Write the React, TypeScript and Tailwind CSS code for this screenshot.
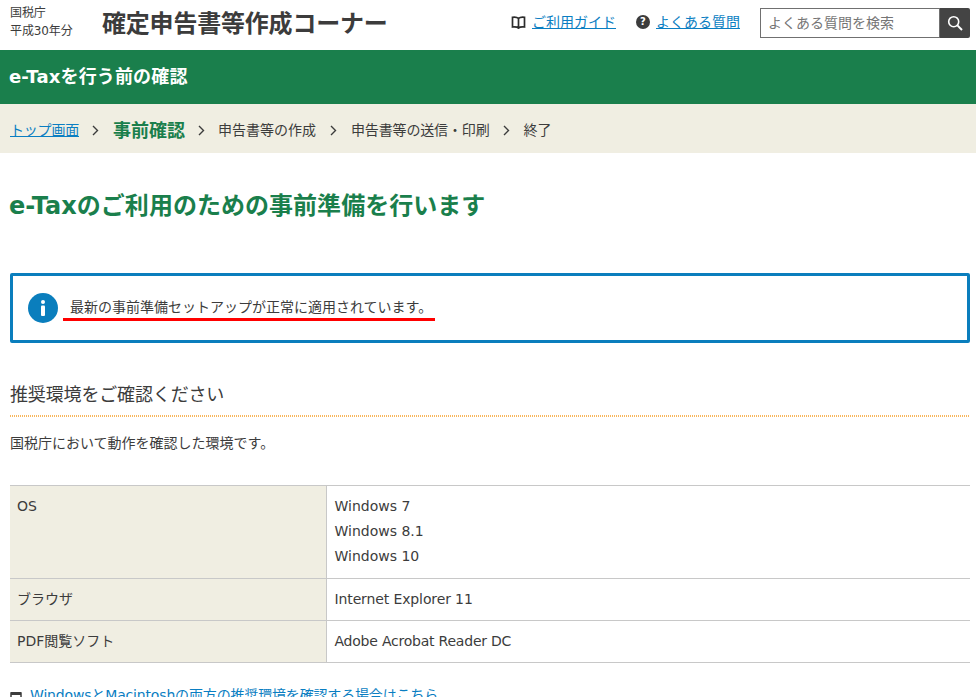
import React from "react";

const mixed = "font-['DejaVu_Sans','Noto_Sans_CJK_JP',sans-serif]";

function Chevron() {
  return (
    <svg width="7" height="11" viewBox="0 0 7 11" className="shrink-0">
      <path d="M1 1l4.5 4.5L1 10" fill="none" stroke="#3c3c3c" strokeWidth="1.4" />
    </svg>
  );
}

export default function App() {
  return (
    <div className={`h-[697px] w-[976px] overflow-hidden bg-white text-[#3c3c3c] ${mixed}`}>
      <header className="flex h-[50px] items-start">
        <div className="ml-[10px] mt-[4px] w-[92px] text-[12px] leading-[18px] tracking-[-0.1px] text-[#3c3c3c]">
          <div>国税庁</div>
          <div>平成30年分</div>
        </div>
        <div className="mt-[11px] w-[300px] text-[24px] font-bold leading-[26px] tracking-[-0.2px] text-[#3c3c3c]">確定申告書等作成コーナー</div>
        <div className="ml-[109px] mt-[12px] flex h-[20px] items-center">
          <svg width="15" height="13" viewBox="0 0 15 13">
            <path d="M7.5 2.5C6.5 1.5 4 1 1.5 1.3V11c2.5-.3 5 .1 6 1 1-.9 3.5-1.3 6-1V1.3C11 1 8.5 1.5 7.5 2.5zM7.5 2.5V12" fill="none" stroke="#2c2c2c" strokeWidth="1.7" />
          </svg>
          <a className="ml-[6px] text-[14px] leading-none text-[#0a7ec2] underline">ご利用ガイド</a>
          <span className="ml-[20px] flex h-[14px] w-[14px] items-center justify-center rounded-full bg-[#3c3c3c] text-[10px] font-bold leading-none text-white">?</span>
          <a className="ml-[6px] text-[14px] leading-none text-[#0a7ec2] underline">よくある質問</a>
        </div>
        <div className="ml-[20px] mt-[8px] flex h-[30px] w-[210px] items-stretch">
          <div className="flex w-[180px] items-center border border-[#707070] pl-[7px] text-[14px] text-[#757575]">よくある質問を検索</div>
          <div className="flex w-[30px] items-center justify-center rounded-r-[2px] bg-[#444444]">
            <svg width="16" height="16" viewBox="0 0 16 16">
              <circle cx="6.7" cy="6.7" r="5" fill="none" stroke="#fff" strokeWidth="1.6" />
              <path d="M10.4 10.4L15 15" stroke="#fff" strokeWidth="2" />
            </svg>
          </div>
        </div>
      </header>

      <div className="flex h-[54px] items-center bg-[#1a7f4c] pb-[1px] pl-[9px] text-[18px] font-bold tracking-[0.15px] text-white">e-Taxを行う前の確認</div>

      <nav className="flex h-[49px] items-center bg-[#f0eee2] pl-[10px] pt-[4px] text-[14px]">
        <a className="tracking-[-0.2px] text-[#0a7ec2] underline">トップ画面</a>
        <span className="ml-[13px]"><Chevron /></span>
        <span className="ml-[14px] text-[18px] font-bold text-[#1a7f4c]">事前確認</span>
        <span className="ml-[13px]"><Chevron /></span>
        <span className="ml-[13px]">申告書等の作成</span>
        <span className="ml-[14px]"><Chevron /></span>
        <span className="ml-[14px] tracking-[-0.15px]">申告書等の送信・印刷</span>
        <span className="ml-[13px]"><Chevron /></span>
        <span className="ml-[14px]">終了</span>
      </nav>

      <main className="pl-[10px] pr-[6px]">
        <h1 className="mt-[35px] -ml-px text-[24px] font-bold leading-[36px] tracking-[0.03px] text-[#1a7f4c]">e-Taxのご利用のための事前準備を行います</h1>

        <div className="relative mt-[49px] flex h-[70px] items-center rounded-[2px] border-[3px] border-[#0a7ebd] pl-[15px]">
          <span className="flex h-[30px] w-[30px] items-center justify-center rounded-full bg-[#0a7ebd]">
            <svg width="6" height="16" viewBox="0 0 6 16">
              <circle cx="3" cy="2" r="2" fill="#fff" />
              <rect x="1" y="5.5" width="4" height="10.5" rx="1" fill="#fff" />
            </svg>
          </span>
          <span className="mb-[2px] ml-[12px] text-[14px] leading-[20px]">最新の事前準備セットアップが正常に適用されています。</span>
          <span className="absolute left-[50px] top-[42px] h-[3px] w-[372px] bg-[#ff0000]" />
        </div>

        <h2 className="mt-[36px] h-[36px] text-[18px] font-normal leading-[32px] tracking-[-0.15px]">推奨環境をご確認ください</h2>
        <div className="h-[2px] bg-[repeating-linear-gradient(to_right,#f8b65c_0,#f8b65c_1px,#ffffff_1px,#ffffff_2px)]" />
        <p className="mt-[16px] text-[14px] leading-[21px]">国税庁において動作を確認した環境です。</p>

        <table className="mt-[31px] w-full border-collapse text-[14px]">
          <tbody>
            <tr className="h-[93px] border-y border-[#c8c8c8]">
              <th className="w-[316px] border-r border-[#c8c8c8] bg-[#f0eee2] px-[7px] pt-[8px] text-left align-top font-normal leading-[25px]">OS</th>
              <td className="px-[8px] py-[8px] align-top leading-[25px]">
                <div>Windows 7</div>
                <div>Windows 8.1</div>
                <div>Windows 10</div>
              </td>
            </tr>
            <tr className="h-[42px] border-y border-[#c8c8c8]">
              <th className="border-r border-[#c8c8c8] bg-[#f0eee2] px-[7px] text-left font-normal">ブラウザ</th>
              <td className="px-[8px] tracking-[-0.12px]">Internet Explorer 11</td>
            </tr>
            <tr className="h-[42px] border-y border-[#c8c8c8]">
              <th className="border-r border-[#c8c8c8] bg-[#f0eee2] px-[7px] text-left font-normal">PDF閲覧ソフト</th>
              <td className="px-[8px] tracking-[-0.22px]">Adobe Acrobat Reader DC</td>
            </tr>
          </tbody>
        </table>

        <div className="mt-[22px] flex items-center text-[14px] leading-[21px]">
          <svg width="13" height="12" viewBox="0 0 13 12" className="shrink-0">
            <rect x="1" y="3" width="10" height="9" fill="none" stroke="#3c3c3c" strokeWidth="1.5" />
            <rect x="1" y="2" width="10" height="3" fill="#3c3c3c" />
          </svg>
          <a className="ml-[7px] tracking-[-0.16px] text-[#0a7ec2] underline">WindowsとMacintoshの両方の推奨環境を確認する場合はこちら</a>
        </div>
      </main>
    </div>
  );
}
